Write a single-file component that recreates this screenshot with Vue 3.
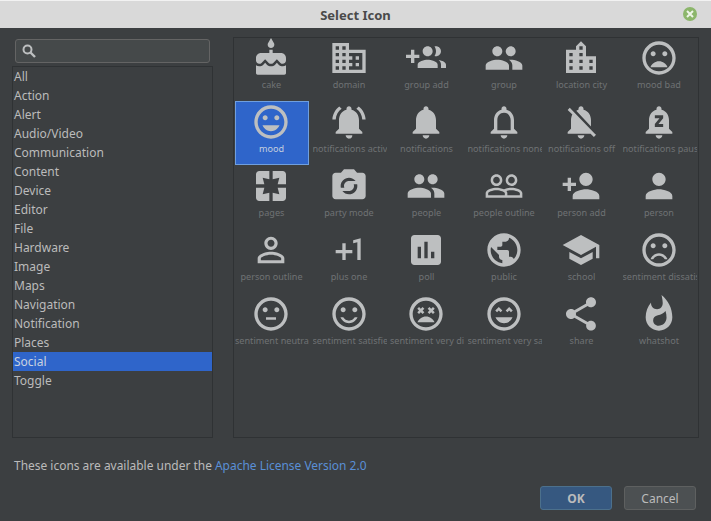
<script setup>
const categories = ['All','Action','Alert','Audio/Video','Communication','Content','Device','Editor','File','Hardware','Image','Maps','Navigation','Notification','Places','Social','Toggle']
const ring = 'M11.99 2C6.47 2 2 6.48 2 12s4.47 10 9.99 10C17.52 22 22 17.52 22 12S17.52 2 11.99 2zM12 20c-4.42 0-8-3.58-8-8s3.58-8 8-8 8 3.58 8 8-3.58 8-8 8z'
const eyes = 'M15.5 11c.83 0 1.5-.67 1.5-1.5S16.33 8 15.5 8 14 8.67 14 9.5s.67 1.5 1.5 1.5zM8.5 11c.83 0 1.5-.67 1.5-1.5S9.33 8 8.5 8 7 8.67 7 9.5 7.67 11 8.5 11z'
const groupPath = 'M16 11c1.66 0 2.99-1.34 2.99-3S17.66 5 16 5c-1.66 0-3 1.34-3 3s1.34 3 3 3zm-8 0c1.66 0 2.99-1.34 2.99-3S9.66 5 8 5C6.34 5 5 6.34 5 8s1.34 3 3 3zm0 2c-2.33 0-7 1.17-7 3.5V19h14v-2.5c0-2.33-4.67-3.5-7-3.5zm8 0c-.29 0-.62.02-.97.05 1.16.84 1.97 1.97 1.97 3.45V19h6v-2.5c0-2.33-4.67-3.5-7-3.5z'
const icons = [
  ['cake','M12 6c1.11 0 2-.9 2-2 0-.38-.1-.73-.29-1.03L12 0l-1.71 2.97c-.19.3-.29.65-.29 1.03 0 1.1.9 2 2 2zm4.6 9.99l-1.07-1.07-1.08 1.07c-1.3 1.3-3.58 1.31-4.89 0l-1.07-1.07-1.09 1.07C6.75 16.64 5.88 17 4.96 17c-.73 0-1.4-.23-1.96-.61V21c0 .55.45 1 1 1h16c.55 0 1-.45 1-1v-4.61c-.56.38-1.23.61-1.96.61-.92 0-1.79-.36-2.44-1.01zM18 9h-5V7h-2v2H6c-1.66 0-3 1.34-3 3v1.54c0 1.08.88 1.96 1.96 1.96.52 0 1.02-.2 1.38-.57l2.14-2.13 2.13 2.13c.74.74 2.03.74 2.77 0l2.14-2.13 2.13 2.13c.37.37.86.57 1.38.57 1.08 0 1.96-.88 1.96-1.96V12C21 10.34 19.66 9 18 9z'],
  ['domain','M12 7V3H2v18h20V7H12zM6 19H4v-2h2v2zm0-4H4v-2h2v2zm0-4H4V9h2v2zm0-4H4V5h2v2zm4 12H8v-2h2v2zm0-4H8v-2h2v2zm0-4H8V9h2v2zm0-4H8V5h2v2zm10 12h-8v-2h2v-2h-2v-2h2v-2h-2V9h8v10zm-2-8h-2v2h2v-2zm0 4h-2v2h2v-2z'],
  ['group add','M8 10H5V7H3v3H0v2h3v3h2v-3h3v-2zm10 1c1.66 0 2.99-1.34 2.99-3S19.66 5 18 5c-.32 0-.63.05-.91.14.57.81.9 1.79.9 2.86s-.34 2.04-.9 2.86c.28.09.59.14.91.14zm-5 0c1.66 0 2.99-1.34 2.99-3S14.66 5 13 5c-1.66 0-3 1.34-3 3s1.34 3 3 3zm6.62 2.16c.83.73 1.38 1.66 1.38 2.84v2h3v-2c0-1.54-2.37-2.49-4.38-2.84zM13 13c-2 0-6 1-6 3v2h12v-2c0-2-4-3-6-3z'],
  ['group',groupPath],
  ['location city','M15 11V5l-3-3-3 3v2H3v14h18V11h-6zm-8 8H5v-2h2v2zm0-4H5v-2h2v2zm0-4H5V9h2v2zm6 8h-2v-2h2v2zm0-4h-2v-2h2v2zm0-4h-2V9h2v2zm0-4h-2V5h2v2zm6 12h-2v-2h2v2zm0-4h-2v-2h2v2z'],
  ['mood bad',ring+eyes+'M12 14c-2.33 0-4.31 1.46-5.11 3.5h10.22c-.8-2.04-2.78-3.5-5.11-3.5z'],
  ['mood',ring+eyes+'M12 17.5c2.33 0 4.31-1.46 5.11-3.5H6.89c.8 2.04 2.78 3.5 5.11 3.5z'],
  ['notifications active','M7.58 4.08L6.15 2.65C3.75 4.48 2.17 7.3 2.03 10.5h2c.15-2.65 1.51-4.97 3.55-6.42zm12.39 6.42h2c-.15-3.2-1.73-6.02-4.12-7.85l-1.42 1.43c2.02 1.45 3.39 3.77 3.54 6.42zM18 11c0-3.07-1.64-5.64-4.5-6.32V4c0-.83-.67-1.5-1.5-1.5s-1.5.67-1.5 1.5v.68C7.63 5.36 6 7.92 6 11v5l-2 2v1h16v-1l-2-2v-5zm-6 11c.14 0 .27-.01.4-.04.65-.14 1.18-.58 1.44-1.18.1-.24.15-.5.15-.78h-4c.01 1.1.9 2 2.01 2z'],
  ['notifications','M12 22c1.1 0 2-.9 2-2h-4c0 1.1.89 2 2 2zm6-6v-5c0-3.07-1.64-5.64-4.5-6.32V4c0-.83-.67-1.5-1.5-1.5s-1.5.67-1.5 1.5v.68C7.63 5.36 6 7.92 6 11v5l-2 2v1h16v-1l-2-2z'],
  ['notifications none','M12 22c1.1 0 2-.9 2-2h-4c0 1.1.9 2 2 2zm6-6v-5c0-3.07-1.63-5.64-4.5-6.32V4c0-.83-.67-1.5-1.5-1.5s-1.5.67-1.5 1.5v.68C7.64 5.36 6 7.92 6 11v5l-2 2v1h16v-1l-2-2zm-2 1H8v-6c0-2.48 1.51-4.5 4-4.5s4 2.02 4 4.5v6z'],
  ['notifications off','M20 18.69L7.84 6.14 5.27 3.49 4 4.76l2.8 2.8v.01c-.52.99-.8 2.16-.8 3.42v5l-2 2v1h13.73l2 2L21 19.72l-1-1.03zM12 22c1.11 0 2-.89 2-2h-4c0 1.11.89 2 2 2zm6-7.32V11c0-3.08-1.64-5.64-4.5-6.32V4c0-.83-.67-1.5-1.5-1.5s-1.5.67-1.5 1.5v.68c-.15.03-.29.08-.42.12-.1.03-.2.07-.3.11h-.01c-.2.08-.4.17-.59.27-.01 0-.01.01-.02.01L18 14.68z'],
  ['notifications paused','M12 22c1.1 0 2-.9 2-2h-4c0 1.1.89 2 2 2zm6-6v-5c0-3.07-1.64-5.64-4.5-6.32V4c0-.83-.67-1.5-1.5-1.5s-1.5.67-1.5 1.5v.68C7.63 5.36 6 7.92 6 11v5l-2 2v1h16v-1l-2-2zm-3.5-6.2l-2.8 3.4h2.8V15h-5v-1.8l2.8-3.4H9.5V8h5v1.8z'],
  ['pages','M3 5v6h5L7 7l4 1V3H5c-1.1 0-2 .9-2 2zm5 8H3v6c0 1.1.9 2 2 2h6v-5l-4 1 1-4zm9 4l-4-1v5h6c1.1 0 2-.9 2-2v-6h-5l1 4zm2-14h-6v5l4-1-1 4h5V5c0-1.1-.9-2-2-2z'],
  ['party mode','M20 4h-3.17L15 2H9L7.17 4H4c-1.1 0-2 .9-2 2v12c0 1.1.9 2 2 2h16c1.1 0 2-.9 2-2V6c0-1.1-.9-2-2-2zm-8 3c1.63 0 3.06.79 3.98 2H12c-1.66 0-3 1.34-3 3 0 .35.07.69.18 1H7.1c-.06-.32-.1-.66-.1-1 0-2.76 2.24-5 5-5zm0 10c-1.63 0-3.06-.79-3.98-2H12c1.66 0 3-1.34 3-3 0-.35-.07-.69-.18-1h2.08c.07.32.1.66.1 1 0 2.76-2.24 5-5 5z'],
  ['people',groupPath],
  ['people outline','M16.5 13c-1.2 0-3.07.34-4.5 1-1.43-.67-3.3-1-4.5-1C5.33 13 1 14.08 1 16.25V19h22v-2.75c0-2.17-4.33-3.25-6.5-3.25zm-4 4.5h-10v-1.25c0-.54 2.56-1.75 5-1.75s5 1.21 5 1.75v1.25zm9 0H14v-1.25c0-.46-.2-.86-.52-1.22.88-.3 1.96-.53 3.02-.53 2.44 0 5 1.21 5 1.75v1.25zM7.5 12c1.93 0 3.5-1.57 3.5-3.5S9.43 5 7.5 5 4 6.57 4 8.5 5.57 12 7.5 12zm0-5.5c1.1 0 2 .9 2 2s-.9 2-2 2-2-.9-2-2 .9-2 2-2zm9 5.5c1.93 0 3.5-1.57 3.5-3.5S18.43 5 16.5 5 13 6.57 13 8.5s1.57 3.5 3.5 3.5zm0-5.5c1.1 0 2 .9 2 2s-.9 2-2 2-2-.9-2-2 .9-2 2-2z'],
  ['person add','M15 12c2.21 0 4-1.79 4-4s-1.79-4-4-4-4 1.79-4 4 1.79 4 4 4zm-9-2V7H4v3H1v2h3v3h2v-3h3v-2H6zm9 4c-2.67 0-8 1.34-8 4v2h16v-2c0-2.66-5.33-4-8-4z'],
  ['person','M12 12c2.21 0 4-1.79 4-4s-1.79-4-4-4-4 1.79-4 4 1.79 4 4 4zm0 2c-2.67 0-8 1.34-8 4v2h16v-2c0-2.66-5.33-4-8-4z'],
  ['person outline','M12 5.9c1.16 0 2.1.94 2.1 2.1s-.94 2.1-2.1 2.1S9.9 9.16 9.9 8s.94-2.1 2.1-2.1m0 9c2.97 0 6.1 1.46 6.1 2.1v1.1H5.9V17c0-.64 3.13-2.1 6.1-2.1M12 4C9.79 4 8 5.79 8 8s1.79 4 4 4 4-1.79 4-4-1.79-4-4-4zm0 9c-2.67 0-8 1.34-8 4v3h16v-3c0-2.66-5.33-4-8-4z'],
  ['plus one','M10 8H8v4H4v2h4v4h2v-4h4v-2h-4zm4.5-1.92V7.9l2.5-.5V18h2V5z'],
  ['poll','M19 3H5c-1.1 0-2 .9-2 2v14c0 1.1.9 2 2 2h14c1.1 0 2-.9 2-2V5c0-1.1-.9-2-2-2zM9 17H7v-7h2v7zm4 0h-2V7h2v10zm4 0h-2v-4h2v4z'],
  ['public','M12 2C6.48 2 2 6.48 2 12s4.48 10 10 10 10-4.48 10-10S17.52 2 12 2zm-1 17.93c-3.95-.49-7-3.85-7-7.93 0-.62.08-1.21.21-1.79L9 15v1c0 1.1.9 2 2 2v1.93zm6.9-2.54c-.26-.81-1-1.39-1.9-1.39h-1v-3c0-.55-.45-1-1-1H8v-2h2c.55 0 1-.45 1-1V7h2c1.1 0 2-.9 2-2v-.41c2.93 1.19 5 4.06 5 7.41 0 2.08-.8 3.97-2.1 5.39z'],
  ['school','M5 13.18v4L12 21l7-3.82v-4L12 17l-7-3.82zM12 3L1 9l11 6 9-4.91V17h2V9L12 3z'],
  ['sentiment dissatisfied',ring+eyes+'M12 14c-2.33 0-4.31 1.46-5.11 3.5h1.67c.69-1.19 1.97-2 3.44-2s2.75.81 3.44 2h1.67c-.8-2.04-2.78-3.5-5.11-3.5z'],
  ['sentiment neutral',ring+eyes+'M9 14h6v1.5H9z'],
  ['sentiment satisfied',ring+eyes+'M12 16c-1.48 0-2.75-.81-3.45-2H6.88c.8 2.05 2.79 3.5 5.12 3.5s4.32-1.45 5.12-3.5h-1.67c-.7 1.19-1.97 2-3.45 2z'],
  ['sentiment very dissatisfied',ring+'M12 13.5c-2.33 0-4.31 1.46-5.11 3.5h10.22c-.8-2.04-2.78-3.5-5.11-3.5zM7.82 12l1.06-1.06L9.94 12 11 10.94 9.94 9.88 11 8.82 9.94 7.76 8.88 8.82 7.82 7.76 6.76 8.82l1.06 1.06-1.06 1.06zm8.36-4.24l-1.06 1.06-1.06-1.06L13 8.82l1.06 1.06L13 10.94 14.06 12l1.06-1.06L16.18 12l1.06-1.06-1.06-1.06 1.06-1.06z'],
  ['sentiment very satisfied',ring+'M8.88 9.94L9.94 11 11 9.94 8.88 7.82 6.76 9.94 7.82 11zM12 17.5c2.33 0 4.31-1.46 5.11-3.5H6.89c.8 2.04 2.78 3.5 5.11 3.5zM13 9.94L14.06 11l1.06-1.06L16.18 11l1.06-1.06-2.12-2.12z'],
  ['share','M18 16.08c-.76 0-1.44.3-1.96.77L8.91 12.7c.05-.23.09-.46.09-.7s-.04-.47-.09-.7l7.05-4.11c.54.5 1.25.81 2.04.81 1.66 0 3-1.34 3-3s-1.34-3-3-3-3 1.34-3 3c0 .24.04.47.09.7L8.04 9.81C7.5 9.31 6.79 9 6 9c-1.66 0-3 1.34-3 3s1.34 3 3 3c.79 0 1.5-.31 2.04-.81l7.12 4.16c-.05.21-.08.43-.08.65 0 1.61 1.31 2.92 2.92 2.92 1.61 0 2.92-1.31 2.92-2.92s-1.31-2.92-2.92-2.92z'],
  ['whatshot','M13.5.67s.74 2.65.74 4.8c0 2.06-1.35 3.73-3.41 3.73-2.07 0-3.63-1.67-3.63-3.73l.03-.36C5.21 7.51 4 10.62 4 14c0 4.42 3.58 8 8 8s8-3.58 8-8C20 8.61 17.41 3.8 13.5.67zM11.71 19c-1.78 0-3.22-1.4-3.22-3.14 0-1.62 1.05-2.76 2.81-3.12 1.77-.36 3.6-1.21 4.62-2.58.39 1.29.59 2.65.59 4.04 0 2.65-2.15 4.8-4.8 4.8z'],
]
</script>

<template>
  <div class="window">
    <header class="titlebar">
      <span class="title">Select Icon</span>
      <span class="close">
        <svg width="8" height="8" viewBox="0 0 8 8"><path d="M1 1l6 6M7 1L1 7" stroke="#eef5e8" stroke-width="2" fill="none" /></svg>
      </span>
    </header>
    <main class="content">
      <div class="columns">
        <aside class="left">
          <div class="search">
            <svg class="search-icon" width="14" height="14" viewBox="0 0 14 14">
              <circle cx="5.5" cy="5.5" r="4" fill="none" stroke="#bdbfc0" stroke-width="2" />
              <path d="M8.5 8.5L13 13" stroke="#bdbfc0" stroke-width="2.4" />
            </svg>
          </div>
          <ul class="list">
            <li v-for="c in categories" :key="c" :class="{ active: c === 'Social' }">{{ c }}</li>
          </ul>
        </aside>
        <section class="panel">
          <div class="grid">
            <div v-for="icon in icons" :key="icon[0]" class="cell">
              <div class="tile" :class="{ selected: icon[0] === 'mood' }">
                <svg class="icon" viewBox="0 0 24 24"><path :d="icon[1]" /></svg>
                <span class="label">{{ icon[0] }}</span>
              </div>
            </div>
          </div>
        </section>
      </div>
      <p class="license">These icons are available under the <a class="link">Apache License Version 2.0</a></p>
      <div class="buttons">
        <button class="btn ok">OK</button>
        <button class="btn">Cancel</button>
      </div>
    </main>
  </div>
</template>

<style scoped>
.window {
  width: 711px;
  height: 521px;
  display: flex;
  flex-direction: column;
  background: #3c3f41;
  font-family: "Noto Sans", sans-serif;
  color: #bbbbbb;
  overflow: hidden;
}
.titlebar {
  height: 28px;
  flex: none;
  box-sizing: border-box;
  border-top: 1px solid #f2f2f2;
  background: #d9d9d9;
  display: flex;
  align-items: center;
  justify-content: center;
  position: relative;
}
.title {
  font-size: 13px;
  font-weight: 700;
  color: #4a4a4a;
}
.close {
  position: absolute;
  right: 14px;
  top: 6px;
  width: 14px;
  height: 14px;
  border-radius: 50%;
  background: #8cb66b;
  display: flex;
  align-items: center;
  justify-content: center;
}
.content {
  flex: 1;
  display: flex;
  flex-direction: column;
  padding: 9px 12px 0;
  min-height: 0;
}
.columns {
  display: flex;
  gap: 20px;
  height: 401px;
  flex: none;
}
.left {
  width: 201px;
  flex: none;
  display: flex;
  flex-direction: column;
}
.search {
  box-sizing: border-box;
  height: 24px;
  margin: 2px 3px 3px;
  border: 1px solid #646464;
  border-radius: 3px;
  background: #45494a;
  display: flex;
  align-items: center;
  padding-left: 6px;
}
.search-icon {
  display: block;
}
.list {
  flex: 1;
  list-style: none;
  margin: 0;
  padding: 0;
  border: 1px solid #2f3234;
}
.list li {
  height: 19px;
  line-height: 19px;
  padding-left: 1px;
  font-size: 12px;
  color: #bbbbbb;
}
.list li.active {
  background: #2f65ca;
  color: #c8d2e0;
}
.panel {
  width: 466px;
  flex: none;
  box-sizing: border-box;
  border: 1px solid #2f3234;
}
.grid {
  display: grid;
  grid-template-columns: repeat(6, 77.5px);
  grid-auto-rows: 64px;
  margin-top: -1px;
}
.cell {
  min-width: 0;
}
.tile {
  box-sizing: border-box;
  width: 74px;
  height: 64px;
  padding-top: 1px;
  margin-left: 1px;
  display: flex;
  flex-direction: column;
  align-items: center;
  overflow: hidden;
}
.tile.selected {
  background: #2f65ca;
  box-shadow: inset 0 0 0 1px #6f9fdf;
}
.icon {
  width: 40px;
  height: 40px;
  flex: none;
  margin-left: -2px;
  fill: #bdbfc0;
}
.label {
  align-self: stretch;
  overflow: hidden;
  padding-right: 1px;
  text-align: center;
  font-size: 9.1px;
  line-height: 13px;
  color: #6f7274;
  white-space: nowrap;
}
.tile.selected .label {
  color: #c5cfde;
}
.license {
  margin: 19px 0 0 2px;
  font-size: 11.96px;
  line-height: 18px;
  color: #bbbbbb;
}
.link {
  color: #5a8fd6;
}
.buttons {
  display: flex;
  justify-content: flex-end;
  gap: 12px;
  margin: 11px 3px 0 0;
}
.btn {
  box-sizing: border-box;
  width: 72px;
  height: 24px;
  padding: 0;
  border: 1px solid #5e6060;
  border-radius: 3px;
  background: #4c5052;
  color: #bbbbbb;
  font-family: inherit;
  font-size: 12px;
}
.btn.ok {
  background: #365880;
  border-color: #4c708c;
  font-weight: 700;
}
</style>
